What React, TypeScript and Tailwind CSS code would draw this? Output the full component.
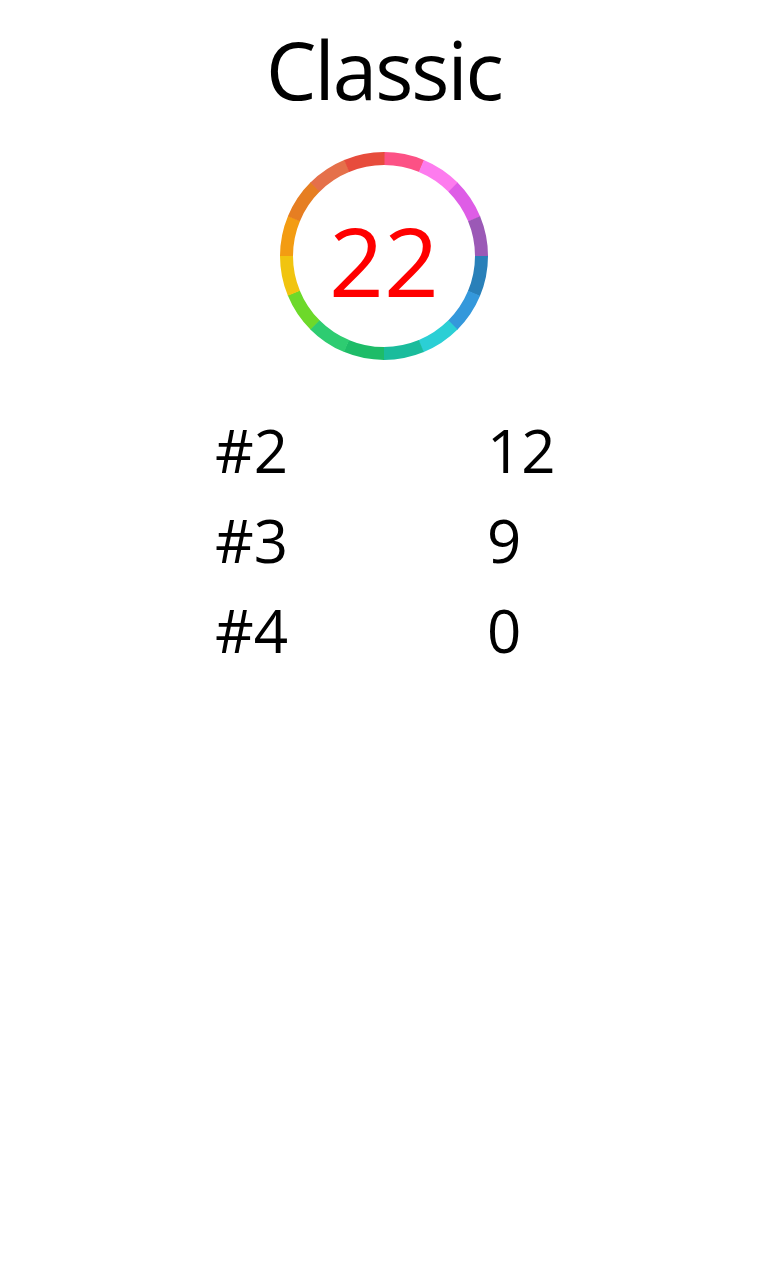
import React from "react";

const segmentColors = [
  "#fc5185",
  "#fd7bee",
  "#de5de6",
  "#9b59b6",
  "#2980b9",
  "#3498db",
  "#2bcfd5",
  "#1abc9c",
  "#1ebc68",
  "#2ecc71",
  "#6dd92a",
  "#f1c40f",
  "#f39c12",
  "#e67e22",
  "#e5704a",
  "#e74c3c",
];

const scores = [
  { rank: "#2", value: 12 },
  { rank: "#3", value: 9 },
  { rank: "#4", value: 0 },
];

const arcPath = (cx: number, cy: number, r: number, from: number, to: number) => {
  const toXY = (deg: number) => {
    const rad = ((deg - 90) * Math.PI) / 180;
    return [cx + r * Math.cos(rad), cy + r * Math.sin(rad)];
  };
  const [x1, y1] = toXY(from);
  const [x2, y2] = toXY(to);
  return `M ${x1} ${y1} A ${r} ${r} 0 0 1 ${x2} ${y2}`;
};

const ColorRing: React.FC<{ score: number }> = ({ score }) => {
  const step = 360 / segmentColors.length;
  return (
    <div className="relative w-[208px] h-[208px] mx-auto mt-[35px]">
      <svg width="208" height="208" viewBox="0 0 208 208" className="absolute inset-0">
        {segmentColors.map((color, i) => (
          <path
            key={i}
            d={arcPath(104, 104, 97.5, i * step, (i + 1) * step + 0.3)}
            stroke={color}
            strokeWidth={13}
            fill="none"
          />
        ))}
      </svg>
      <div className="absolute inset-0 flex items-center justify-center pt-[8px]">
        <span className="text-[96px] leading-[96px] text-[#ff0000]">{score}</span>
      </div>
    </div>
  );
};

export default function App() {
  return (
    <div
      className="min-h-[1280px] bg-white text-black"
      style={{ fontFamily: '"Open Sans", "Noto Sans", sans-serif' }}
    >
      <h1 className="pt-[21px] text-center text-[80px] leading-[96px] font-normal tracking-[-2px]">
        Classic
      </h1>

      <ColorRing score={22} />

      <div className="mt-[45px] ml-[215px] grid grid-cols-[272px_1fr]">
        {scores.map((s) => (
          <React.Fragment key={s.rank}>
            <div className="text-[60px] leading-[90px]">{s.rank}</div>
            <div className="text-[60px] leading-[90px]">{s.value}</div>
          </React.Fragment>
        ))}
      </div>
    </div>
  );
}
